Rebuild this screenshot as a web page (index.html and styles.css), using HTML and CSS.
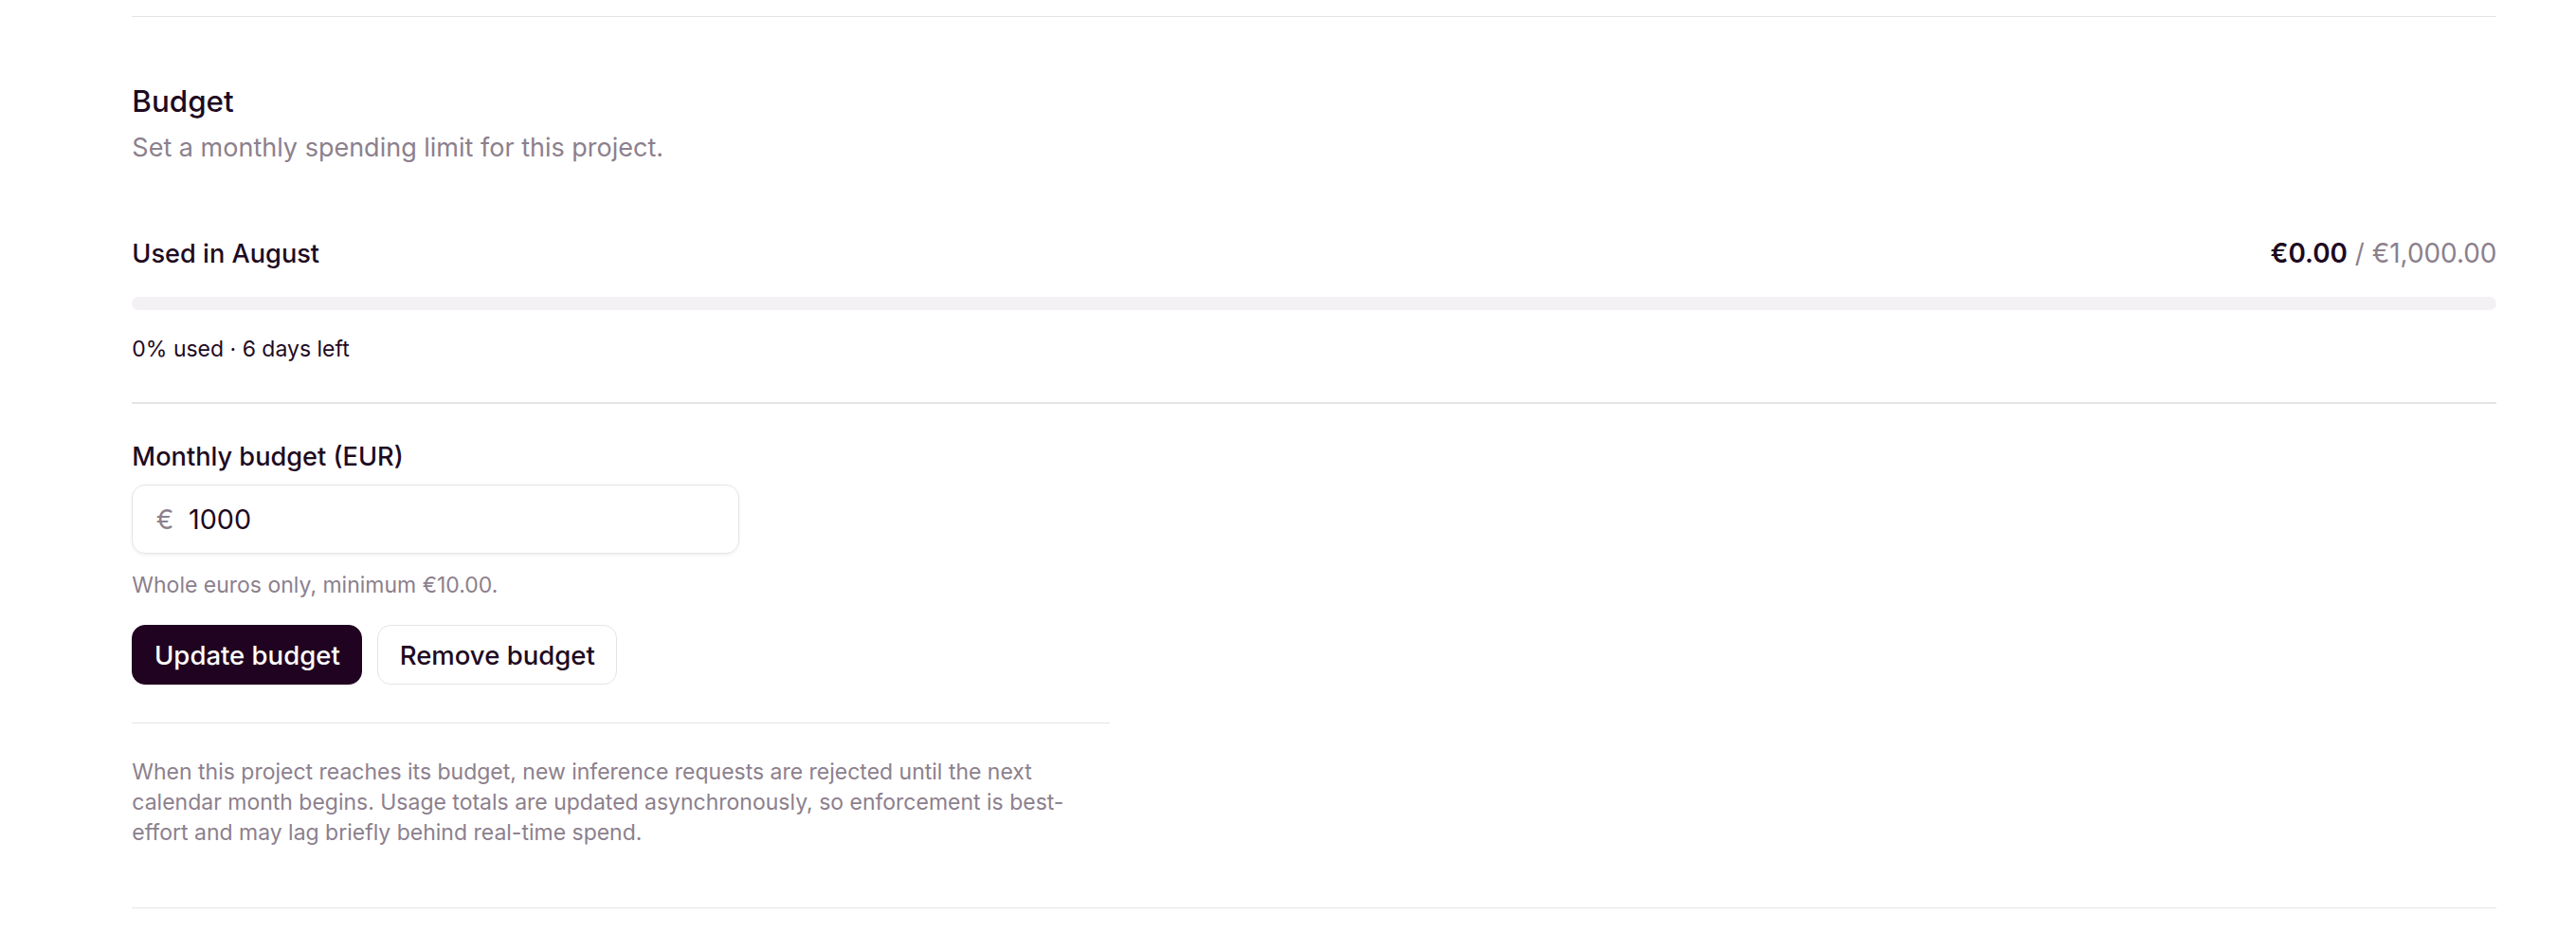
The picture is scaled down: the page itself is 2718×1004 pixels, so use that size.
FILE: index.html
```html
<!DOCTYPE html>
<html lang="en">
<head>
    <meta charset="UTF-8">
    <meta name="viewport" content="width=device-width, initial-scale=1.0">
    <title>Project Budget</title>
    <link rel="stylesheet" href="styles.css">
</head>
<body>
    <div class="page">
        <section class="budget-section">
            <h2>Budget</h2>
            <p class="subtitle">Set a monthly spending limit for this project.</p>

            <div class="usage-row">
                <span class="usage-label">Used in August</span>
                <span class="usage-amount"><strong>€0.00</strong> / €1,000.00</span>
            </div>
            <div class="progress"><div class="progress-fill" style="width: 0%;"></div></div>
            <p class="usage-meta">0% used · 6 days left</p>

            <div class="divider"></div>

            <form class="budget-form">
                <label for="budget">Monthly budget (EUR)</label>
                <div class="input-wrap">
                    <span class="currency">€</span>
                    <input type="text" id="budget" name="budget" value="1000">
                </div>
                <p class="hint">Whole euros only, minimum €10.00.</p>
                <div class="actions">
                    <button type="submit" class="btn btn-primary">Update budget</button>
                    <button type="button" class="btn btn-secondary">Remove budget</button>
                </div>
            </form>

            <div class="note">
                <p>When this project reaches its budget, new inference requests are rejected until the next calendar month begins. Usage totals are updated asynchronously, so enforcement is best-effort and may lag briefly behind real-time spend.</p>
            </div>
        </section>
    </div>
</body>
</html>
```

FILE: styles.css
```css
html {
    zoom: 1.742;
}
body {
    margin: 0;
    padding: 0;
    background-color: #ffffff;
    color: #1e0a1f;
    font-family: Inter, "Liberation Sans", Arial, sans-serif;
}
.page {
    padding: 10px 48px 0 80px;
}
.budget-section {
    border-top: 1px solid #e4e4e6;
    border-bottom: 1px solid #e4e4e6;
    padding: 37px 0 36px;
}
h2 {
    font-size: 18px;
    font-weight: 500;
    line-height: 28px;
    margin: 0;
}
.subtitle {
    font-size: 15.5px;
    line-height: 22px;
    color: #8c808d;
    margin: 3px 0 0;
}
.usage-row {
    display: flex;
    justify-content: space-between;
    align-items: center;
    margin-top: 41px;
    line-height: 24px;
}
.usage-label {
    font-size: 15.6px;
    font-weight: 500;
}
.usage-amount {
    font-size: 16px;
    color: #8c808d;
}
.usage-amount strong {
    color: #1e0a1f;
    font-weight: 600;
}
.progress {
    height: 8px;
    margin-top: 14px;
    background-color: #f3f1f4;
    border-radius: 4px;
    overflow: hidden;
}
.progress-fill {
    height: 100%;
    background-color: #200320;
}
.usage-meta {
    font-size: 13.2px;
    line-height: 20px;
    margin: 14px 0 0;
}
.divider {
    height: 1px;
    background-color: #e4e4e6;
    margin-top: 22px;
}
.budget-form {
    padding-top: 20px;
}
label {
    display: block;
    font-size: 15.6px;
    font-weight: 500;
    line-height: 24px;
}
.input-wrap {
    display: flex;
    align-items: center;
    width: 368px;
    height: 42px;
    margin-top: 5px;
    box-sizing: border-box;
    border: 1px solid #e4e4e6;
    border-radius: 8px;
    box-shadow: 0 1px 2px rgba(0, 0, 0, 0.05);
    padding: 0 14px;
}
.currency {
    color: #8c808d;
    font-size: 16px;
    margin-right: 9px;
}
.input-wrap input {
    flex: 1;
    border: none;
    outline: none;
    padding: 0;
    font-family: inherit;
    font-size: 16.5px;
    color: #1e0a1f;
    background: transparent;
}
.hint {
    font-size: 13.2px;
    line-height: 20px;
    color: #8c808d;
    margin: 9px 0 0;
}
.actions {
    display: flex;
    gap: 9px;
    margin-top: 14px;
}
.btn {
    height: 36px;
    padding: 0 13px;
    font-family: inherit;
    font-size: 15.8px;
    font-weight: 500;
    border-radius: 8px;
    cursor: pointer;
}
.btn-primary {
    background-color: #200320;
    color: #ffffff;
    border: 1px solid #200320;
}
.btn-secondary {
    background-color: #ffffff;
    color: #1e0a1f;
    border: 1px solid #e4e4e6;
}
.note {
    width: 592px;
    margin-top: 23px;
    border-top: 1px solid #e4e4e6;
    padding-top: 20px;
}
.note p {
    font-size: 13.2px;
    line-height: 18.5px;
    color: #8c808d;
    margin: 0;
    max-width: 580px;
}
```
